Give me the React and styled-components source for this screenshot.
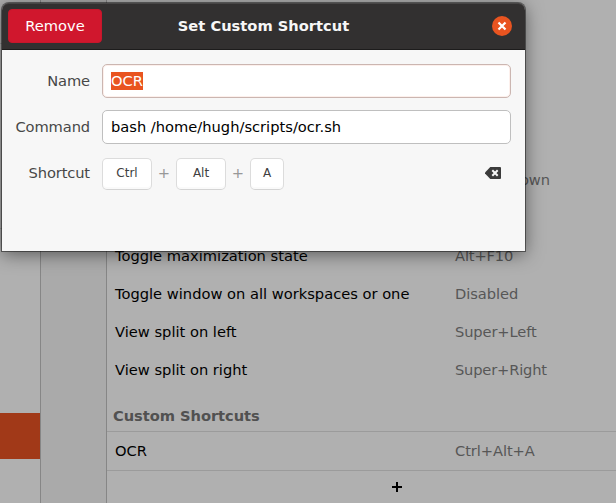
import React from "react";
import styled, { createGlobalStyle } from "styled-components";

const GlobalStyle = createGlobalStyle`
  * { box-sizing: border-box; }
  body { margin: 0; overflow: hidden; }
`;

const Screen = styled.div`
  position: relative;
  display: grid;
  grid-template-columns: 41px 66px 1fr;
  width: 616px;
  height: 503px;
  overflow: hidden;
  background: #b0b0b0;
  font-family: "DejaVu Sans", sans-serif;
  font-size: 14.67px;
  line-height: 18px;
  color: #000;
  white-space: nowrap;
`;

const Sidebar = styled.div`
  border-right: 1px solid #868686;
  padding-top: 43px;
`;

const SidebarGroup = styled.div`
  height: ${(p) => p.$height}px;
  border-top: 1px solid #9a9a9a;
`;

const ActiveItem = styled.div`
  height: 46px;
  background: #a13918;
`;

const Gutter = styled.div`
  background: #aaa;
  border-right: 1px solid #868686;
`;

const Panel = styled.div`
  display: flex;
  flex-direction: column;
  padding-top: 161px;
`;

const Row = styled.div`
  display: grid;
  grid-template-columns: 340px 1fr;
  align-items: center;
  height: 38px;
  padding-left: 8px;
`;

const Name = styled.span`
  letter-spacing: 0;
`;

const Accel = styled.span`
  color: #575757;
  letter-spacing: ${(p) => p.$spacing || 0}px;
`;

const SectionTitle = styled.div`
  height: 42px;
  padding: 18px 0 0 6px;
  font-weight: bold;
  letter-spacing: -0.05px;
  color: #515151;
`;

const CustomRow = styled(Row)`
  height: 40px;
  border-top: 1px solid #9b9b9b;
  border-bottom: 1px solid #9b9b9b;
`;

const AddRow = styled.div`
  height: 32px;
  padding: 11px 0 0 285px;
`;

const Dialog = styled.section`
  position: absolute;
  left: 2px;
  top: 3px;
  width: 523px;
  height: 248px;
  border-radius: 7px 7px 0 0;
  background: #f7f7f7;
  box-shadow: 0 0 0 1px rgba(0, 0, 0, 0.44), 0 3px 18px rgba(0, 0, 0, 0.5);
`;

const TitleBar = styled.header`
  display: grid;
  grid-template-columns: 94px 1fr 94px;
  align-items: center;
  height: 47px;
  padding: 0 6px;
  border-radius: 7px 7px 0 0;
  border-bottom: 1px solid #1d1c1c;
  background: #323030;
  box-shadow: inset 0 1px #484646;
  color: #f7f7f7;
`;

const RemoveButton = styled.button`
  height: 34px;
  padding: 0;
  border: 1px solid #c7162b;
  border-radius: 4px;
  background: #d0172d;
  color: #fff;
  font: inherit;
`;

const Title = styled.h1`
  margin: 0;
  text-align: center;
  font-size: 14.67px;
  line-height: 18px;
  font-weight: bold;
`;

const CloseButton = styled.button`
  display: block;
  width: 20px;
  height: 20px;
  margin-left: 67px;
  padding: 0;
  border: 0;
  border-radius: 50%;
  background: #e95420;
`;

const Form = styled.div`
  display: grid;
  grid-template-columns: 88px 409px;
  grid-template-rows: 34px 34px 34px;
  gap: 12px;
  padding: 14px 0 0;
`;

const Label = styled.label`
  align-self: center;
  text-align: right;
  letter-spacing: -0.12px;
  color: #474747;
`;

const Field = styled.div`
  display: flex;
  align-items: center;
  height: 34px;
  padding-left: 8px;
  border: 1px solid ${(p) => (p.$focused ? "#cbb6b1" : "#bfbfbf")};
  border-radius: 5px;
  background: #fff;
  box-shadow: ${(p) => (p.$focused ? "inset 0 0 0 1px #fdf0ec" : "none")};
`;

const Selection = styled.span`
  width: 32px;
  background: #e95420;
  color: #fff;
`;

const ShortcutLine = styled.div`
  display: flex;
  align-items: center;
`;

const Keycap = styled.kbd`
  display: flex;
  justify-content: center;
  width: ${(p) => p.$width}px;
  height: 32px;
  margin-top: 2px;
  padding-top: 5px;
  border: 1px solid #dcdcdc;
  border-bottom-color: #d4d4d4;
  border-radius: 5px;
  background: #fff;
  box-shadow: inset 0 -2px #fafafa;
  color: #404040;
  font-family: inherit;
  font-size: 12px;
`;

const Plus = styled.span`
  width: 24px;
  text-align: center;
  color: #989898;
`;

const ClearButton = styled.button`
  display: flex;
  margin-left: auto;
  margin-right: 10px;
  padding: 0;
  border: 0;
  background: none;
`;

const shortcuts = [
  ["", "Super+Down", -0.2],
  ["", "", 0],
  ["Toggle maximization state", "Alt+F10", -0.15],
  ["Toggle window on all workspaces or one", "Disabled", -0.05],
  ["View split on left", "Super+Left", -0.12],
  ["View split on right", "Super+Right", -0.18],
];

export default function App() {
  return (
    <>
      <GlobalStyle />
      <Screen>
        <Sidebar>
          <SidebarGroup $height={185} />
          <SidebarGroup $height={185} />
          <ActiveItem />
        </Sidebar>
        <Gutter />
        <Panel>
          {shortcuts.map(([name, accel, spacing], i) => (
            <Row key={i}>
              <Name>{name}</Name>
              <Accel $spacing={spacing}>{accel}</Accel>
            </Row>
          ))}
          <SectionTitle>Custom Shortcuts</SectionTitle>
          <CustomRow>
            <Name>OCR</Name>
            <Accel $spacing={-0.08}>Ctrl+Alt+A</Accel>
          </CustomRow>
          <AddRow>
            <svg width="10" height="10" display="block" shapeRendering="crispEdges">
              <path d="M4 0h2v4h4v2H6v4H4V6H0V4h4z" />
            </svg>
          </AddRow>
        </Panel>
        <Dialog>
          <TitleBar>
            <RemoveButton>Remove</RemoveButton>
            <Title>Set Custom Shortcut</Title>
            <CloseButton aria-label="Close">
              <svg width="20" height="20" display="block">
                <path d="M6.5 6.5l7 7M13.5 6.5l-7 7" stroke="#fff" strokeWidth="2.2" />
              </svg>
            </CloseButton>
          </TitleBar>
          <Form>
            <Label>Name</Label>
            <Field $focused>
              <Selection>OCR</Selection>
            </Field>
            <Label>Command</Label>
            <Field>bash /home/hugh/scripts/ocr.sh</Field>
            <Label>Shortcut</Label>
            <ShortcutLine>
              <Keycap $width={50}>Ctrl</Keycap>
              <Plus>+</Plus>
              <Keycap $width={50}>Alt</Keycap>
              <Plus>+</Plus>
              <Keycap $width={34}>A</Keycap>
              <ClearButton aria-label="Clear shortcut">
                <svg width="16" height="12" display="block">
                  <path d="M5.3 0H15a1 1 0 0 1 1 1v10a1 1 0 0 1-1 1H5.3L0 6.6V5.4z" fill="#3b3b3b" />
                  <path d="M7.3 3.3l5.4 5.4M12.7 3.3l-5.4 5.4" stroke="#f7f7f7" strokeWidth="2" />
                </svg>
              </ClearButton>
            </ShortcutLine>
          </Form>
        </Dialog>
      </Screen>
    </>
  );
}
